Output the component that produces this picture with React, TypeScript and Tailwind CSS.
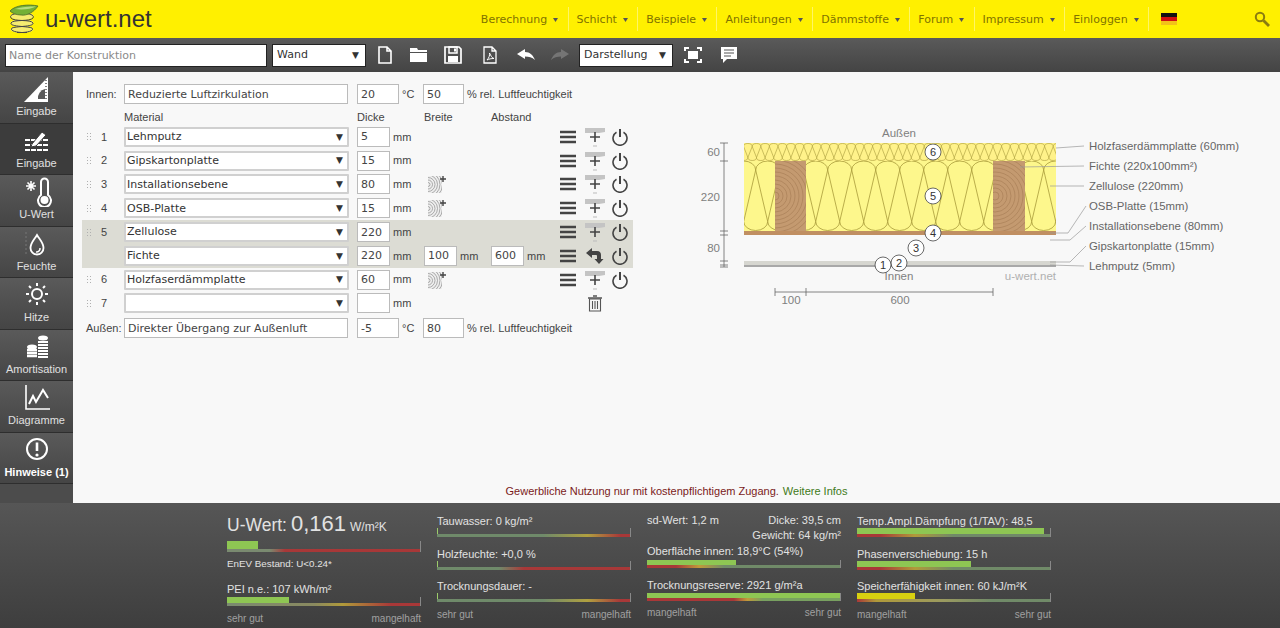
import type { ReactNode } from 'react'

const VERDANA = 'font-["DejaVu_Sans",sans-serif]'

const NAV = ['Berechnung', 'Schicht', 'Beispiele', 'Anleitungen', 'Dämmstoffe', 'Forum', 'Impressum', 'Einloggen']

function lobes(x0: number, n: number, p: number, top: number, bottom: number, h: number): string {
  let d = `M${x0} ${top + h}`
  for (let k = 0; k < n; k++) {
    const x = x0 + k * p
    d += ` A${p / 2} ${h} 0 0 1 ${x + p} ${top + h}`
    d += ` L${x + 1.5 * p} ${bottom - h}`
    d += ` A${p / 2} ${h} 0 0 1 ${x + 0.5 * p} ${bottom - h}`
    d += ` L${x + p} ${top + h}`
  }
  return d
}

function Logo() {
  return (
    <svg width="32" height="30" viewBox="0 0 32 30" className="shrink-0">
      <ellipse cx="15" cy="12" rx="11.5" ry="4" fill="#f6ec70" />
      <ellipse cx="15" cy="19" rx="11.5" ry="4" fill="#f6ec70" />
      <ellipse cx="15" cy="25.5" rx="11.5" ry="3.5" fill="#f6ec70" />
      <path d="M17 9C7 9 2 11 4 14C7 18 24 15 26 19C27 23 10 22 5 24C2 27 11 29 20 28.5" fill="none" stroke="#444" strokeWidth="1" />
      <path d="M12 9C22 9 28 11 26 14C23 18 6 15 4 19C3 23 20 22 25 24C28 27 19 29 10 28.5" fill="none" stroke="#444" strokeWidth="1" />
      <path d="M3 7C8 1 22 0 31 2C27 8 20 12 14 11C9 11 5 9 3 7Z" fill="#74b035" stroke="#4d6b28" strokeWidth="0.8" />
      <path d="M8 5C14 3 22 2.5 29 2.5C24 5 16 6 8 5Z" fill="#b6dc80" />
    </svg>
  )
}

function ToolIcon({ children, className }: { children: ReactNode; className: string }) {
  return (
    <svg width="20" height="20" viewBox="0 0 20 20" className={className}>
      {children}
    </svg>
  )
}

function Toolbar() {
  return (
    <div className={`flex h-[34px] items-center bg-gradient-to-b from-[#5a5a5a] to-[#444444] pl-[5px] ${VERDANA} text-[11px]`}>
      <input
        readOnly
        placeholder="Name der Konstruktion"
        className="h-[23px] w-[262px] border border-[#222] bg-white px-[3px] pt-[1px] text-[#333] placeholder:text-[#8a8a8a]"
      />
      <div className="ml-[5px] flex h-[23px] w-[94px] items-center justify-between border border-[#222] bg-white pl-[4px] pr-[6px] pt-[1px] text-[#333]">
        Wand <span className="text-[9px]">▼</span>
      </div>
      <ToolIcon className="ml-[9px]">
        <path d="M4 2H12L16 6V18H4Z M12 2V6H16" fill="none" stroke="#fff" strokeWidth="1.6" />
      </ToolIcon>
      <ToolIcon className="ml-[14px]">
        <path d="M1 3H8L9 5H18V7H1Z M1 8H18V17H1Z" fill="#fff" />
      </ToolIcon>
      <ToolIcon className="ml-[14px]">
        <path d="M2 2H16L18 4V18H2Z" fill="none" stroke="#fff" strokeWidth="1.7" />
        <path d="M6 2H14V8H6Z" fill="none" stroke="#fff" strokeWidth="1.5" />
        <path d="M11 3.5H13V6.5H11Z M5 11H15V17H5Z" fill="#fff" />
      </ToolIcon>
      <ToolIcon className="ml-[17px]">
        <path d="M4 2H12L16 6V18H4Z M12 2V6H16" fill="none" stroke="#fff" strokeWidth="1.3" />
        <path d="M7 15C9 13 10 10 9.5 8C11 11 12 13 14 13.5C11 13.5 9 14 7 15Z" fill="none" stroke="#fff" strokeWidth="1" />
      </ToolIcon>
      <ToolIcon className="ml-[16px]">
        <path d="M1 9L9 4V7C14 7 17 10 19 15C16 12 13 11.5 9 11.5V14Z" fill="#fff" />
      </ToolIcon>
      <ToolIcon className="ml-[14px]">
        <path d="M19 9L11 4V7C6 7 3 10 1 15C4 12 7 11.5 11 11.5V14Z" fill="#757575" />
      </ToolIcon>
      <div className="ml-[9px] flex h-[23px] w-[94px] items-center justify-between border border-[#222] bg-white pl-[4px] pr-[6px] pt-[1px] text-[#333]">
        Darstellung <span className="text-[9px]">▼</span>
      </div>
      <ToolIcon className="ml-[10px]">
        <path d="M2 6V3H6 M14 3H18V6 M18 14V17H14 M6 17H2V14" fill="none" stroke="#fff" strokeWidth="2" />
        <path d="M5 6H15V14H5Z" fill="#fff" />
      </ToolIcon>
      <ToolIcon className="ml-[16px]">
        <path d="M2 2H18V14H8L4 18V14H2Z" fill="#fff" />
        <path d="M5 5H15 M5 8H15 M5 11H12" stroke="#555" strokeWidth="1" />
      </ToolIcon>
    </div>
  )
}

const SIDE: { label: string; active?: boolean; bold?: boolean; icon: ReactNode }[] = [
  {
    label: 'Eingabe',
    icon: (
      <>
        <path d="M6 28L30 3V28Z" fill="#fff" />
        <path d="M20 25A9 9 0 0 1 27 15V25Z" fill="#5a5a5a" />
        <path d="M28 6V27" stroke="#555" strokeWidth="1.5" strokeDasharray="1 2" />
      </>
    ),
  },
  {
    label: 'Eingabe',
    active: true,
    icon: (
      <>
        <path d="M7 14H31 M7 19H31 M7 24H31" stroke="#fff" strokeWidth="2" strokeDasharray="5 1" />
        <path d="M14 18L24 6L28 9L18 20L13 21Z" fill="#fff" stroke="#3c3c3c" strokeWidth="1" />
      </>
    ),
  },
  {
    label: 'U-Wert',
    icon: (
      <>
        <path d="M8 9H18 M13 4V14 M9.5 5.5L16.5 12.5 M16.5 5.5L9.5 12.5" stroke="#fff" strokeWidth="1.6" />
        <path d="M23 18V5A3.5 3.5 0 0 1 30 5V18A6.5 6.5 0 1 1 23 18Z" fill="none" stroke="#fff" strokeWidth="2" />
        <circle cx="26.5" cy="23" r="4" fill="#fff" />
      </>
    ),
  },
  {
    label: 'Feuchte',
    icon: (
      <>
        <path d="M8 3V26" stroke="#777" strokeWidth="1" strokeDasharray="2 2" />
        <path d="M19 6C22 11 25.500 14 25.500 19A6.500 6.500 0 0 1 12.500 19C12.500 14 16 11 19 6Z" fill="none" stroke="#fff" strokeWidth="1.8" />
        <path d="M22 19A3.5 3.5 0 0 1 18 23" fill="none" stroke="#fff" strokeWidth="1.5" />
      </>
    ),
  },
  {
    label: 'Hitze',
    icon: (
      <>
        <circle cx="19" cy="14" r="5" fill="none" stroke="#fff" strokeWidth="2" />
        <path d="M19 3V6 M19 22V25 M8 14H11 M27 14H30 M11 6L13 8 M27 6L25 8 M11 22L13 20 M27 22L25 20" stroke="#fff" strokeWidth="2" />
      </>
    ),
  },
  {
    label: 'Amortisation',
    icon: (
      <>
        <ellipse cx="14" cy="15" rx="5" ry="2.5" fill="#fff" />
        <path d="M9 18H19 M9 21H19 M9 24H19" stroke="#fff" strokeWidth="2.4" />
        <ellipse cx="25" cy="6" rx="5" ry="2.5" fill="#fff" />
        <path d="M20 10H30 M20 13H30 M20 16H30 M20 19H30 M20 22H30 M20 25H30" stroke="#fff" strokeWidth="2.2" />
      </>
    ),
  },
  {
    label: 'Diagramme',
    icon: (
      <>
        <path d="M8 2V26H32" fill="none" stroke="#fff" strokeWidth="1.6" />
        <path d="M11 21L15 13L18 19L25 7L30 15" fill="none" stroke="#fff" strokeWidth="2" />
      </>
    ),
  },
  {
    label: 'Hinweise (1)',
    bold: true,
    icon: (
      <>
        <circle cx="19" cy="14" r="10" fill="none" stroke="#fff" strokeWidth="2" />
        <path d="M19 7.5V16" stroke="#fff" strokeWidth="2.6" />
        <circle cx="19" cy="20" r="1.6" fill="#fff" />
      </>
    ),
  },
]

function Sidebar() {
  return (
    <div className="flex w-[73px] shrink-0 flex-col bg-[#4c4c4c] font-['Liberation_Sans',sans-serif] text-[11px]">
      {SIDE.map((it, i) => (
        <div
          key={i}
          className={
            it.active
              ? 'flex h-[51.5px] flex-col items-center border-b border-[#2e2e2e] bg-[#3c3c3c] pt-[2px] text-[#e0e0e0]'
              : 'flex h-[51.5px] flex-col items-center border-b border-[#2e2e2e] bg-gradient-to-b from-[#5a5a5a] to-[#454545] pt-[2px] text-[#e0e0e0]'
          }
        >
          <svg width="38" height="30" viewBox="0 0 38 30" className="shrink-0">
            {it.icon}
          </svg>
          <span className={it.bold ? 'mt-[-1px] font-bold text-white' : 'mt-[-1px]'}>{it.label}</span>
        </div>
      ))}
    </div>
  )
}

function NumInput({ value, className }: { value: string; className: string }) {
  return (
    <input
      readOnly
      value={value}
      className={`h-[20px] border border-[#bbb] bg-white px-[3px] ${VERDANA} text-[11px] text-[#444] ${className}`}
    />
  )
}

function MaterialSelect({ value }: { value: string }) {
  return (
    <div className={`flex h-[20px] w-[225px] items-center rounded-[1px] border-2 border-[#d0d0d0] bg-white pl-[1px] pr-[4px] pt-[1px] ${VERDANA} text-[11px] text-[#333]`}>
      {value}
      <span className="ml-auto text-[9px] text-[#333]">▼</span>
    </div>
  )
}

function Burger() {
  return (
    <svg width="16" height="14" viewBox="0 0 16 14" className="shrink-0">
      <path d="M0 2H16 M0 7H16 M0 12H16" stroke="#444" strokeWidth="2.4" />
    </svg>
  )
}

function LayerPlus() {
  return (
    <svg width="20" height="22" viewBox="0 0 20 22" className="ml-[9px] shrink-0">
      <path d="M0 2H20V6L14 7H0V4Z" fill="#c4c4c4" />
      <path d="M10 6V16 M5 11H15" stroke="#444" strokeWidth="1.6" />
      <path d="M8 20H12" stroke="#bbb" strokeWidth="1" />
    </svg>
  )
}

function Power() {
  return (
    <svg width="18" height="18" viewBox="0 0 18 18" className="ml-[6px] shrink-0">
      <path d="M5.5 4.2A7 7 0 1 0 12.5 4.2" fill="none" stroke="#444" strokeWidth="1.6" />
      <path d="M9 1V9" stroke="#444" strokeWidth="2" />
    </svg>
  )
}

function ReturnArrow() {
  return (
    <svg width="20" height="18" viewBox="0 0 20 18" className="ml-[9px] shrink-0">
      <path d="M1 6L7 1V4H12C15 4 16 6 16 8V12H18.5L14 17L9.5 12H12V9C12 8 11.5 8 11 8H7V11Z" fill="#444" />
    </svg>
  )
}

function Trash() {
  return (
    <svg width="14" height="17" viewBox="0 0 14 17">
      <path d="M0 3H14 M5 1H9" stroke="#555" strokeWidth="1.4" />
      <path d="M1.5 4H12.5V16H1.5Z M4.5 6V14 M7 6V14 M9.5 6V14" fill="none" stroke="#555" strokeWidth="1.1" />
    </svg>
  )
}

function Hatch({ id }: { id: string }) {
  const rings = [2, 4.5, 7, 9.5, 12, 14.5, 17, 19.5]
  return (
    <svg width="20" height="20" viewBox="0 0 20 20" className="ml-[3px]">
      <clipPath id={id}>
        <rect x="1" y="2" width="14" height="17" />
      </clipPath>
      <rect x="1" y="2" width="14" height="17" fill="#eeeeee" />
      <g clipPath={`url(#${id})`} fill="none" stroke="#8c8c8c" strokeWidth="0.7">
        {rings.map((r) => (
          <circle key={r} cx="1" cy="10.5" r={r} />
        ))}
      </g>
      <path d="M16 2V8 M13 5H19" stroke="#444" strokeWidth="1.4" />
    </svg>
  )
}

type RowData = {
  n?: string
  mat: string
  d: string
  hatch?: boolean
  sub?: boolean
  empty?: boolean
  active?: boolean
}

const ROWS: RowData[] = [
  { n: '1', mat: 'Lehmputz', d: '5' },
  { n: '2', mat: 'Gipskartonplatte', d: '15' },
  { n: '3', mat: 'Installationsebene', d: '80', hatch: true },
  { n: '4', mat: 'OSB-Platte', d: '15', hatch: true },
  { n: '5', mat: 'Zellulose', d: '220', active: true },
  { mat: 'Fichte', d: '220', sub: true, active: true },
  { n: '6', mat: 'Holzfaserdämmplatte', d: '60', hatch: true },
  { n: '7', mat: '', d: '', empty: true },
]

function Row({ row, index }: { row: RowData; index: number }) {
  return (
    <div className={row.active ? 'flex h-[23.8px] items-center bg-[#dcdcd4]' : 'flex h-[23.8px] items-center'}>
      <div className="flex w-[42px] shrink-0 items-center pl-[4px]">
        {row.n && (
          <>
            <span className="h-[9px] w-[5px] bg-[radial-gradient(#b0b0b0_1px,transparent_1px)] bg-[length:3px_3px]" />
            <span className="ml-[10px] text-[#444]">{row.n}</span>
          </>
        )}
      </div>
      <MaterialSelect value={row.mat} />
      <NumInput value={row.d} className="ml-[8px] w-[33px]" />
      <span className="ml-[3px] w-[31px] text-[#444]">mm</span>
      <div className="flex w-[136px] shrink-0 items-center">
        {row.hatch && <Hatch id={`wood-${index}`} />}
        {row.sub && (
          <>
            <NumInput value="100" className="w-[33px]" />
            <span className="ml-[3px] w-[31px] text-[#444]">mm</span>
            <NumInput value="600" className="w-[33px]" />
            <span className="ml-[3px] text-[#444]">mm</span>
          </>
        )}
      </div>
      {row.empty ? (
        <div className="ml-[28px]">
          <Trash />
        </div>
      ) : (
        <>
          <Burger />
          {row.sub ? <ReturnArrow /> : <LayerPlus />}
          <Power />
        </>
      )}
    </div>
  )
}

function ClimateRow({ label, name, temp, hum }: { label: string; name: string; temp: string; hum: string }) {
  return (
    <div className="flex h-[20px] items-center text-[#444]">
      <span className="w-[42px] shrink-0 pl-[4px]">{label}</span>
      <NumInput value={name} className="w-[224px]" />
      <NumInput value={temp} className="ml-[9px] w-[42px]" />
      <span className="ml-[3px] w-[21px]">°C</span>
      <NumInput value={hum} className="w-[41px]" />
      <span className="ml-[3px]">% rel. Luftfeuchtigkeit</span>
    </div>
  )
}

function Form() {
  return (
    <div className="ml-[9px] mt-[12px] w-[551px] shrink-0 font-['Liberation_Sans',sans-serif] text-[11px]">
      <ClimateRow label="Innen:" name="Reduzierte Luftzirkulation" temp="20" hum="50" />
      <div className="mt-[6px] flex h-[15px] items-center text-[#444]">
        <span className="ml-[42px] w-[233px]">Material</span>
        <span className="w-[67px]">Dicke</span>
        <span className="w-[67px]">Breite</span>
        <span>Abstand</span>
      </div>
      {ROWS.map((r, i) => (
        <Row key={i} row={r} index={i} />
      ))}
      <div className="mt-[3px]">
        <ClimateRow label="Außen:" name="Direkter Übergang zur Außenluft" temp="-5" hum="80" />
      </div>
    </div>
  )
}

const CIRCLES: [string, number, number][] = [
  ['6', 933, 152],
  ['5', 933, 196],
  ['4', 933, 233],
  ['3', 916, 248],
  ['2', 899, 263],
  ['1', 883, 265],
]

const LABELS: [string, number, string][] = [
  ['Holzfaserdämmplatte (60mm)', 150, 'M1056 148L1084 146'],
  ['Fichte (220x100mm²)', 170, 'M1020 167L1084 166'],
  ['Zellulose (220mm)', 190, 'M1050 186L1084 186'],
  ['OSB-Platte (15mm)', 210, 'M1050 233H1068L1086 206'],
  ['Installationsebene (80mm)', 230, 'M1050 240H1070L1086 226'],
  ['Gipskartonplatte (15mm)', 250, 'M1050 262H1070L1086 246'],
  ['Lehmputz (5mm)', 270, 'M1050 265L1084 266'],
]

function Drawing() {
  const rings = [4, 8, 12, 16, 20, 24, 28, 32, 36, 40]
  return (
    <svg
      width="560"
      height="190"
      viewBox="690 120 560 190"
      className="ml-[57px] mt-[48px] shrink-0 font-['Liberation_Sans',sans-serif]"
    >
      <defs>
        <clipPath id="upper">
          <rect x="744" y="143" width="312" height="18" />
        </clipPath>
        <clipPath id="mid">
          <rect x="744" y="161" width="312" height="70" />
        </clipPath>
        <clipPath id="beam1">
          <rect x="775" y="161" width="31" height="70" />
        </clipPath>
        <clipPath id="beam2">
          <rect x="993" y="161" width="32" height="70" />
        </clipPath>
      </defs>

      <rect x="744" y="143" width="312" height="18" fill="#fff28a" />
      <path d={lobes(735, 38, 8.6, 143.5, 160.5, 3)} fill="none" stroke="#a89b3a" strokeWidth="0.6" clipPath="url(#upper)" />
      <rect x="744" y="161" width="312" height="70" fill="#fdf78c" />
      <path d={lobes(731.7, 15, 24, 161, 230.5, 9)} fill="none" stroke="#a89b3a" strokeWidth="0.8" clipPath="url(#mid)" />

      <rect x="775" y="161" width="31" height="70" fill="#c49a70" />
      <g clipPath="url(#beam1)" fill="none" stroke="#a98058" strokeWidth="0.7">
        {rings.map((r) => (
          <circle key={r} cx="775" cy="196" r={r} />
        ))}
      </g>
      <rect x="993" y="161" width="32" height="70" fill="#c49a70" />
      <g clipPath="url(#beam2)" fill="none" stroke="#a98058" strokeWidth="0.7">
        {rings.map((r) => (
          <circle key={r} cx="995" cy="196" r={r} />
        ))}
      </g>

      <rect x="744" y="231" width="312" height="4" fill="#c08f62" />
      <rect x="744" y="261" width="312" height="4" fill="#d6d6d0" />
      <rect x="744" y="265" width="312" height="2" fill="#a8a8a8" />

      <g stroke="#666" strokeWidth="0.8" fill="none">
        <path d="M724 143V267" />
        <path d="M720 143H728 M720 161H728 M720 231H728 M720 235H728 M720 261H728 M720 265H728 M720 267H728" />
        <path d="M775 292H993 M775 288V296 M806 288V296 M993 288V296" />
      </g>

      <g fill="#808080" fontSize="11.5">
        <text x="720" y="156" textAnchor="end">60</text>
        <text x="720" y="201" textAnchor="end">220</text>
        <text x="720" y="252" textAnchor="end">80</text>
        <text x="791" y="304" textAnchor="middle">100</text>
        <text x="900" y="304" textAnchor="middle">600</text>
        <text x="899" y="137" textAnchor="middle">Außen</text>
        <text x="899" y="280" textAnchor="middle">Innen</text>
      </g>
      <text x="1056" y="280" textAnchor="end" fill="#b0b0b0" fontSize="11.5">u-wert.net</text>

      {LABELS.map(([t, y, d]) => (
        <g key={t}>
          <path d={d} fill="none" stroke="#999" strokeWidth="0.7" />
          <text x="1089" y={y} fill="#666" fontSize="11.4">{t}</text>
        </g>
      ))}

      {CIRCLES.map(([t, x, y]) => (
        <g key={t}>
          <circle cx={x} cy={y} r="8" fill="#fff" stroke="#444" strokeWidth="0.8" />
          <text x={x} y={y + 4} textAnchor="middle" fill="#333" fontSize="11">{t}</text>
        </g>
      ))}
    </svg>
  )
}

function Meter({
  pct,
  thick,
  barClass,
  lineClass,
}: {
  pct: number
  thick: string
  barClass: string
  lineClass: string
}) {
  return (
    <div className="flex flex-col border-r border-[#888]">
      <div className={thick}>
        <div className={`h-full ${barClass}`} style={{ width: `${pct}%` }} />
      </div>
      <div className={`h-[3px] ${lineClass}`} />
    </div>
  )
}

const GREEN = 'bg-[#8ec653]'
const TICK = 'bg-[#9ccc6a]'
const LABEL = 'flex h-[16px] items-center pt-[2px]'
const BAD_RIGHT_A = 'bg-[linear-gradient(90deg,#7a8a70_0%,#7a8a70_22%,#a83838_30%,#a83838_100%)]'
const BAD_RIGHT_B = 'bg-[linear-gradient(90deg,#7a8a70_0%,#8a8a60_45%,#b09a3a_60%,#a83838_85%,#a83838_100%)]'
const BAD_RIGHT_C = 'bg-[linear-gradient(90deg,#6f8a6a_0%,#6f8a6a_55%,#b0a040_78%,#a83838_95%)]'
const BAD_RIGHT_D = 'bg-[linear-gradient(90deg,#6f8a6a_0%,#6f8a6a_32%,#a83838_45%,#a83838_100%)]'
const BAD_LEFT_A = 'bg-[linear-gradient(90deg,#a83838_0%,#a83838_15%,#c09a3a_27%,#708a68_40%,#708a68_100%)]'
const BAD_LEFT_B = 'bg-[linear-gradient(90deg,#a83838_0%,#a83838_45%,#c09a3a_52%,#78a060_60%,#78a060_100%)]'
const BAD_LEFT_C = 'bg-[linear-gradient(90deg,#a83838_0%,#a83838_12%,#b09a3a_30%,#708a68_50%,#708a68_100%)]'
const BAD_LEFT_D = 'bg-[linear-gradient(90deg,#a83838_0%,#b09a3a_10%,#9a9a60_45%,#708a68_70%,#708a68_100%)]'

function Legend({ left, right, className }: { left: string; right: string; className: string }) {
  return (
    <div className={`flex h-[16px] items-center justify-between text-[10px] text-[#a0a0a0] ${className}`}>
      <span>{left}</span>
      <span>{right}</span>
    </div>
  )
}

function Footer() {
  return (
    <div className="flex h-[125px] justify-center bg-gradient-to-b from-[#565656] to-[#3e3e3e] pt-[9px] font-['Liberation_Sans',sans-serif] text-[11px] text-[#e2e2e2]">
      <div className="ml-[-2px] w-[194px]">
        <div className="flex h-[24px] items-baseline leading-[24px]">
          <span className="text-[17.5px]">U-Wert:</span>
          <span className="ml-[4px] text-[22px]">0,161</span>
          <span className="ml-[4px] text-[12px]">W/m²K</span>
        </div>
        <div className="mt-[5px]">
          <Meter pct={16} thick="h-[8px]" barClass={GREEN} lineClass={BAD_RIGHT_A} />
        </div>
        <div className={`mt-[3px] text-[9.8px] ${LABEL}`}>EnEV Bestand: U&lt;0.24*</div>
        <div className={`mt-[9px] ${LABEL}`}>PEI n.e.: 107 kWh/m²</div>
        <div className="mt-[1px]">
          <Meter pct={32} thick="h-[6px]" barClass={GREEN} lineClass={BAD_RIGHT_B} />
        </div>
        <Legend left="sehr gut" right="mangelhaft" className="mt-[4px]" />
      </div>

      <div className="ml-[16px] w-[194px]">
        <div className={LABEL}>Tauwasser: 0 kg/m²</div>
        <Meter pct={0.5} thick="h-[6px]" barClass={TICK} lineClass={BAD_RIGHT_C} />
        <div className={`mt-[8px] ${LABEL}`}>Holzfeuchte: +0,0 %</div>
        <Meter pct={0.5} thick="h-[6px]" barClass={TICK} lineClass={BAD_RIGHT_D} />
        <div className={`mt-[7px] ${LABEL}`}>Trocknungsdauer: -</div>
        <Meter pct={0.5} thick="h-[6px]" barClass={TICK} lineClass={BAD_RIGHT_C} />
        <Legend left="sehr gut" right="mangelhaft" className="mt-[4px]" />
      </div>

      <div className="ml-[16px] w-[194px]">
        <div className="flex h-[15px] items-center justify-between pt-[2px]">
          <span>sd-Wert: 1,2 m</span>
          <span>Dicke: 39,5 cm</span>
        </div>
        <div className="flex h-[15px] items-center justify-end pt-[2px]">Gewicht: 64 kg/m²</div>
        <div className={LABEL}>Oberfläche innen: 18,9°C (54%)</div>
        <div className="mt-[2px]">
          <Meter pct={46} thick="h-[5px]" barClass={GREEN} lineClass={BAD_LEFT_A} />
        </div>
        <div className={`mt-[8px] ${LABEL}`}>Trocknungsreserve: 2921 g/m²a</div>
        <div className="mt-[1px]">
          <Meter pct={100} thick="h-[5px]" barClass={GREEN} lineClass={BAD_LEFT_B} />
        </div>
        <Legend left="mangelhaft" right="sehr gut" className="mt-[3px]" />
      </div>

      <div className="ml-[16px] w-[194px]">
        <div className={LABEL}>Temp.Ampl.Dämpfung (1/TAV): 48,5</div>
        <Meter pct={97} thick="h-[6px]" barClass={GREEN} lineClass={BAD_LEFT_C} />
        <div className={`mt-[8px] ${LABEL}`}>Phasenverschiebung: 15 h</div>
        <Meter pct={59} thick="h-[6px]" barClass={GREEN} lineClass={BAD_LEFT_C} />
        <div className={`mt-[7px] ${LABEL}`}>Speicherfähigkeit innen: 60 kJ/m²K</div>
        <Meter pct={30} thick="h-[6px]" barClass="bg-[#d8d010]" lineClass={BAD_LEFT_D} />
        <Legend left="mangelhaft" right="sehr gut" className="mt-[4px]" />
      </div>
    </div>
  )
}

export default function App() {
  return (
    <div className="flex h-[628px] w-[1280px] flex-col overflow-hidden">
      <div className="flex h-[38px] items-center bg-[#fff000]">
        <div className="ml-[7px] flex items-center">
          <Logo />
          <span className="ml-[6px] font-['Liberation_Sans',sans-serif] text-[24px] leading-none text-[#333]">u-wert.net</span>
        </div>
        <nav className={`ml-auto flex h-[24px] items-center ${VERDANA} text-[11px] text-[#7f7300]`}>
          {NAV.map((n) => (
            <div key={n} className="flex h-full items-center gap-[6px] border-r border-[#fff566] pl-[8px] pr-[9.4px] pt-[2px]">
              {n}
              <svg width="5" height="4" viewBox="0 0 5 4">
                <path d="M0 0H5L2.5 4Z" fill="#555" />
              </svg>
            </div>
          ))}
        </nav>
        <svg width="16" height="12" viewBox="0 0 16 12" className="ml-[12px]">
          <rect width="16" height="4" fill="#111" />
          <rect y="4" width="16" height="4" fill="#d01010" />
          <rect y="8" width="16" height="4" fill="#f2c21a" />
        </svg>
        <svg width="16" height="16" viewBox="0 0 16 16" className="ml-[77px] mr-[10px]">
          <circle cx="6" cy="6" r="4.2" fill="none" stroke="#8a7c10" strokeWidth="2" />
          <path d="M9.5 9.5L15 15" stroke="#8a7c10" strokeWidth="2.8" />
        </svg>
      </div>
      <Toolbar />
      <div className="flex min-h-0 flex-1">
        <Sidebar />
        <div className="flex min-w-0 flex-1 flex-col bg-[#f8f8f8]">
          <div className="flex flex-1">
            <Form />
            <Drawing />
          </div>
          <div className="flex h-[20px] items-start justify-center font-['Liberation_Sans',sans-serif] text-[11px]">
            <span className="text-[#7a1a1a]">Gewerbliche Nutzung nur mit kostenpflichtigem Zugang.</span>
            <span className="ml-[4px] text-[#3f7a20]">Weitere Infos</span>
          </div>
        </div>
      </div>
      <Footer />
    </div>
  )
}
